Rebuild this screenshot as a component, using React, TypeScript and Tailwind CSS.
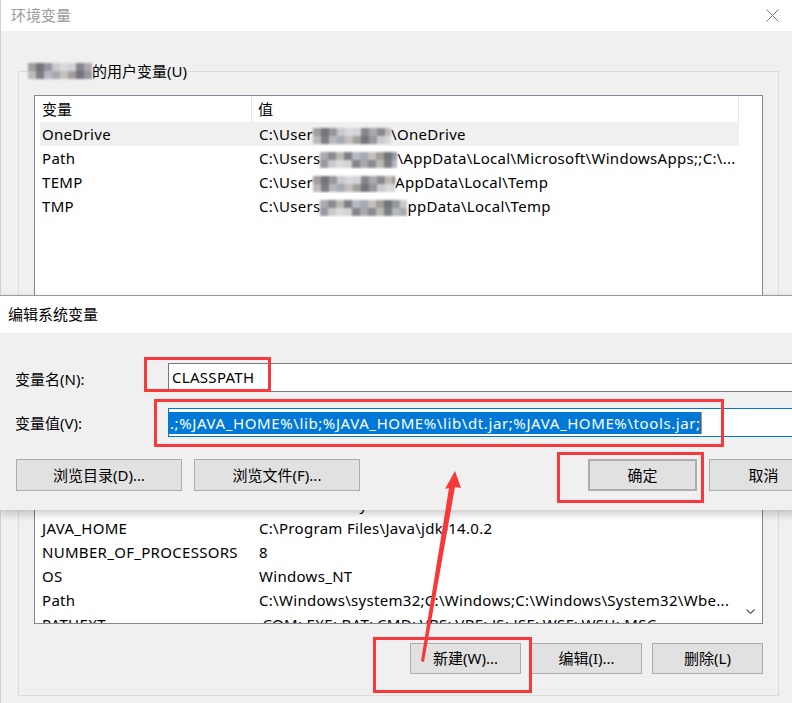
import React from 'react';

const shades = ['#a9a9af', '#7e7e85', '#c4c1be', '#9698a0', '#d4d4d7', '#8b8a91', '#b6bac0', '#a29e9a', '#cacacd', '#85858c', '#bdb9b6', '#a6aab1', '#74747b', '#d9d9dc'];

// pixelated, blurred user name
const Mosaic = ({ w, seed = 0 }: { w: number; seed?: number }) => {
  const cols = Math.ceil(w / 8);
  return (
    <span className="inline-flex flex-col align-middle blur-[0.8px]" style={{ width: w }}>
      {[0, 1].map((r) => (
        <span key={r} className="flex h-[8px] overflow-hidden">
          {Array.from({ length: cols }).map((_, c) => (
            <span
              key={c}
              className="h-[8px] w-[8px] shrink-0"
              style={{ background: shades[(c * 5 + r * 3 + seed * 7) % shades.length] }}
            />
          ))}
        </span>
      ))}
    </span>
  );
};

type Item = { name: string; value: React.ReactNode; selected?: boolean };

const userVars: Item[] = [
  { name: 'OneDrive', value: <>C:\User<Mosaic w={78} seed={1} />\OneDrive</>, selected: true },
  { name: 'Path', value: <>C:\Users<Mosaic w={77} seed={2} />\AppData\Local\Microsoft\WindowsApps;;C:\...</> },
  { name: 'TEMP', value: <>C:\User<Mosaic w={82} seed={3} />AppData\Local\Temp</> },
  { name: 'TMP', value: <>C:\Users<Mosaic w={87} seed={4} />ppData\Local\Temp</> },
];

const sysVars: Item[] = [
  { name: 'ComSpec', value: 'C:\\Windows\\system32\\cmd.exe' },
  { name: 'DriverData', value: 'C:\\Windows\\System32\\Drivers\\DriverData' },
  { name: 'JAVA_HOME', value: 'C:\\Program Files\\Java\\jdk-14.0.2' },
  { name: 'NUMBER_OF_PROCESSORS', value: '8' },
  { name: 'OS', value: 'Windows_NT' },
  { name: 'Path', value: 'C:\\Windows\\system32;C:\\Windows;C:\\Windows\\System32\\Wbe...' },
  { name: 'PATHEXT', value: '.COM;.EXE;.BAT;.CMD;.VBS;.VBE;.JS;.JSE;.WSF;.WSH;.MSC' },
  { name: 'PROCESSOR_ARCHITECTURE', value: 'AMD64' },
];

const ListBox = ({ items, height, scroll }: { items: Item[]; height: string; scroll?: boolean }) => (
  <div className={`flex w-[729px] overflow-hidden border border-[#828790] bg-white ${height}`}>
    <div className="w-[704px] shrink-0">
      <div className="flex h-[26px] items-center">
        <div className="h-full w-[217px] border-r border-[#e5e5e5] pl-[7px] leading-[26px]">变量</div>
        <div className="h-full flex-1 border-r border-[#e5e5e5] pl-[6px] leading-[26px]">值</div>
      </div>
      {items.map((it) => (
        <div
          key={it.name}
          className={`ml-[5px] flex h-6 w-[699px] items-center whitespace-nowrap tracking-[0.3px] ${it.selected ? 'bg-[#f0f0f0]' : ''}`}
        >
          <div className="w-[212px] shrink-0 pl-[2px]">{it.name}</div>
          <div className="overflow-hidden pl-[7px]">{it.value}</div>
        </div>
      ))}
    </div>
    {scroll && (
      <div className="flex flex-1 flex-col items-center justify-end pb-[8px]">
        <svg width="9" height="6" viewBox="0 0 9 6">
          <polyline points="0.5,0.5 4.5,4.5 8.5,0.5" fill="none" stroke="#606060" strokeWidth="1.2" />
        </svg>
      </div>
    )}
  </div>
);

const Btn = ({ children, className = '' }: { children: React.ReactNode; className?: string }) => (
  <div className={`flex items-center justify-center border border-[#adadad] bg-[#e1e1e1] ${className}`}>{children}</div>
);

const RedBox = ({ className }: { className: string }) => (
  <div className={`pointer-events-none absolute border-[3px] border-[#f7393b] ${className}`} />
);

export default function App() {
  return (
    <div className="relative h-[703px] w-[792px] overflow-hidden bg-[#f0f0f0] font-['Noto_Sans','Noto_Sans_CJK_SC',sans-serif] text-[15px] text-black">
      {/* back window: 环境变量 */}
      <div className="flex h-full flex-col border-l border-[#cfcfcf]">
        <div className="flex h-[31px] shrink-0 items-center justify-between bg-white pl-[10px] pr-[13px] text-[#9b9b9b]">
          <span>环境变量</span>
          <svg width="13" height="13" viewBox="0 0 13 13">
            <path d="M0.5 0.5 L12.5 12.5 M12.5 0.5 L0.5 12.5" stroke="#777" strokeWidth="1" />
          </svg>
        </div>
        <div className="flex-1 pl-[17px] pt-[40px]">
          <div className="relative h-[334px] w-[761px] border border-[#dcdcdc] pl-[15px] pt-[23px]">
            <div className="absolute -top-[11px] left-[9px] flex items-center bg-[#f0f0f0] pr-[1px] leading-[20px]">
              <Mosaic w={64} seed={5} />
              <span>的用户变量(U)</span>
            </div>
            <ListBox items={userVars} height="h-[287px]" />
          </div>
          <div className="relative mt-[12px] h-[279px] w-[761px] border border-[#dcdcdc] pl-[15px] pt-[23px]">
            <div className="absolute -top-[11px] left-[9px] bg-[#f0f0f0] px-[1px] leading-[20px]">系统变量(S)</div>
            <ListBox items={sysVars} height="h-[183px]" scroll />
            <div className="mt-[19px] flex w-[729px] justify-end gap-[10px]">
              <Btn className="h-[31px] w-[111px]">新建(W)...</Btn>
              <Btn className="h-[31px] w-[111px]">编辑(I)...</Btn>
              <Btn className="h-[31px] w-[111px]">删除(L)</Btn>
            </div>
          </div>
        </div>
      </div>

      {/* front dialog: 编辑系统变量 */}
      <div className="absolute left-0 top-[295px] w-[830px] border-t border-[#9a9a9a] shadow-[0_4px_8px_rgba(0,0,0,0.2)]">
        <div className="flex h-[37px] items-center bg-white pl-[8px]">编辑系统变量</div>
        <div className="h-[177px] bg-[#f0f0f0] pt-[30px]">
          <div className="flex h-[29px] items-center">
            <div className="w-[168px] shrink-0 pl-[15px] pt-[3px]">变量名(N):</div>
            <div className="flex h-full flex-1 items-center border border-[#7a7a7a] bg-white pl-[3px] tracking-[0.3px]">CLASSPATH</div>
          </div>
          <div className="mt-[16px] flex h-[29px] items-center">
            <div className="w-[168px] shrink-0 pl-[15px] pt-[1px]">变量值(V):</div>
            <div className="flex h-full flex-1 items-center border border-[#0078d7] bg-white">
              <span className="whitespace-nowrap bg-[#0078d7] pl-[1px] leading-[22px] tracking-[0.6px] text-white">
                .;%JAVA_HOME%\lib;%JAVA_HOME%\lib\dt.jar;%JAVA_HOME%\tools.jar;
              </span>
              <span className="h-[22px] w-[1px] bg-[#e0843c]" />
            </div>
          </div>
          <div className="mt-[22px] flex pl-[16px]">
            <Btn className="h-[32px] w-[166px]">浏览目录(D)...</Btn>
            <Btn className="ml-[12px] h-[32px] w-[166px]">浏览文件(F)...</Btn>
            <Btn className="ml-[228px] h-[32px] w-[109px] border-2 border-[#0078d7]">确定</Btn>
            <Btn className="ml-[12px] h-[32px] w-[109px]">取消</Btn>
          </div>
        </div>
      </div>

      {/* annotations */}
      <RedBox className="left-[144px] top-[357px] h-[35px] w-[127px]" />
      <RedBox className="left-[154px] top-[399px] h-[48px] w-[570px]" />
      <RedBox className="left-[557px] top-[452px] h-[51px] w-[147px]" />
      <RedBox className="left-[373px] top-[637px] h-[56px] w-[159px]" />
      <svg className="pointer-events-none absolute left-0 top-0" width="792" height="703" viewBox="0 0 792 703">
        <polygon points="455,471 461,488 455,487 424,662 421,661 449,488 445,489" fill="#f7393b" />
      </svg>
    </div>
  );
}
